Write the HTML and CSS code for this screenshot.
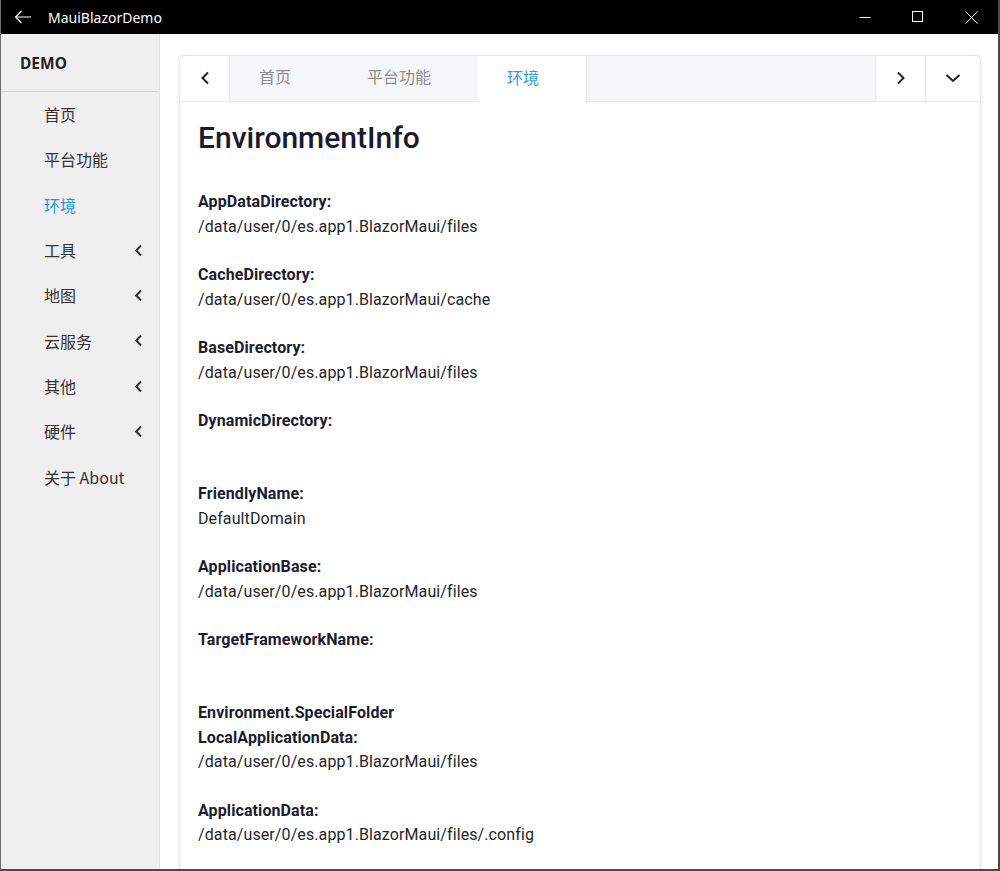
FILE: index.html
```html
<!DOCTYPE html>
<html lang="zh">
<head>
<meta charset="utf-8">
<title>MauiBlazorDemo</title>
<link rel="stylesheet" href="styles.css">
</head>
<body>
<div class="window">
  <header class="titlebar">
    <svg class="tb-back" width="18" height="14" viewBox="0 0 18 14"><path d="M17 7H1.5M7.5 1L1.5 7l6 6" fill="none" stroke="#fff" stroke-width="1.1"/></svg>
    <span class="tb-title">MauiBlazorDemo</span>
    <div class="tb-controls">
      <span class="tb-btn"><svg width="12" height="12" viewBox="0 0 12 12"><path d="M0.5 6.5h11" stroke="#fff" stroke-width="1"/></svg></span>
      <span class="tb-btn"><svg width="12" height="12" viewBox="0 0 12 12"><rect x="0.5" y="0.5" width="10" height="10" fill="none" stroke="#fff" stroke-width="1"/></svg></span>
      <span class="tb-btn"><svg width="13" height="13" viewBox="0 0 13 13"><path d="M0.5 0.5l12 12M12.5 0.5l-12 12" stroke="#fff" stroke-width="1"/></svg></span>
    </div>
  </header>
  <div class="body">
    <nav class="sidebar">
      <div class="brand">DEMO</div>
      <ul class="menu">
        <li class="menu-item">首页</li>
        <li class="menu-item">平台功能</li>
        <li class="menu-item active">环境</li>
        <li class="menu-item">工具<svg class="chev" width="9" height="13" viewBox="0 0 9 13"><path d="M7 1.5L2.2 6.5 7 11.5" fill="none" stroke="#333" stroke-width="2"/></svg></li>
        <li class="menu-item">地图<svg class="chev" width="9" height="13" viewBox="0 0 9 13"><path d="M7 1.5L2.2 6.5 7 11.5" fill="none" stroke="#333" stroke-width="2"/></svg></li>
        <li class="menu-item">云服务<svg class="chev" width="9" height="13" viewBox="0 0 9 13"><path d="M7 1.5L2.2 6.5 7 11.5" fill="none" stroke="#333" stroke-width="2"/></svg></li>
        <li class="menu-item">其他<svg class="chev" width="9" height="13" viewBox="0 0 9 13"><path d="M7 1.5L2.2 6.5 7 11.5" fill="none" stroke="#333" stroke-width="2"/></svg></li>
        <li class="menu-item">硬件<svg class="chev" width="9" height="13" viewBox="0 0 9 13"><path d="M7 1.5L2.2 6.5 7 11.5" fill="none" stroke="#333" stroke-width="2"/></svg></li>
        <li class="menu-item">关于 About</li>
      </ul>
    </nav>
    <main class="main">
      <section class="card">
        <div class="tabbar">
          <span class="tab-nav"><svg width="10" height="14" viewBox="0 0 10 14"><path d="M8 1.5L2.5 7 8 12.5" fill="none" stroke="#222" stroke-width="2"/></svg></span>
          <div class="tabs">
            <span class="tab">首页</span>
            <span class="tab">平台功能</span>
            <span class="tab active">环境</span>
          </div>
          <span class="tab-nav"><svg width="10" height="14" viewBox="0 0 10 14"><path d="M2 1.5L7.5 7 2 12.5" fill="none" stroke="#222" stroke-width="2"/></svg></span>
          <span class="tab-nav wide"><svg width="16" height="10" viewBox="0 0 16 10"><path d="M1.5 2l6.5 6 6.5-6" fill="none" stroke="#222" stroke-width="2"/></svg></span>
        </div>
        <div class="content">
          <h1 class="title">EnvironmentInfo</h1>
          <dl class="info">
            <div class="info-item"><dt>AppDataDirectory:</dt><dd>/data/user/0/es.app1.BlazorMaui/files</dd></div>
            <div class="info-item"><dt>CacheDirectory:</dt><dd>/data/user/0/es.app1.BlazorMaui/cache</dd></div>
            <div class="info-item"><dt>BaseDirectory:</dt><dd>/data/user/0/es.app1.BlazorMaui/files</dd></div>
            <div class="info-item"><dt>DynamicDirectory:</dt><dd></dd></div>
            <div class="info-item"><dt>FriendlyName:</dt><dd>DefaultDomain</dd></div>
            <div class="info-item"><dt>ApplicationBase:</dt><dd>/data/user/0/es.app1.BlazorMaui/files</dd></div>
            <div class="info-item"><dt>TargetFrameworkName:</dt><dd></dd></div>
            <div class="info-item"><dt>Environment.SpecialFolder<br>LocalApplicationData:</dt><dd>/data/user/0/es.app1.BlazorMaui/files</dd></div>
            <div class="info-item"><dt>ApplicationData:</dt><dd>/data/user/0/es.app1.BlazorMaui/files/.config</dd></div>
          </dl>
        </div>
      </section>
    </main>
  </div>
</div>
</body>
</html>
```

FILE: styles.css
```css
* { box-sizing: border-box; }
html, body { margin: 0; padding: 0; height: 100%; overflow: hidden; background: #fff; }
body { font-family: Roboto, "Noto Sans CJK SC", sans-serif; }

.window {
  width: 1000px;
  height: 871px;
  display: flex;
  flex-direction: column;
  border-left: 1px solid #6e6e6e;
  border-right: 2px solid #4a4a4a;
  border-bottom: 2px solid #4a4a4a;
  overflow: hidden;
}

.titlebar {
  height: 34px;
  flex: none;
  background: #000;
  color: #fff;
  display: flex;
  align-items: center;
}
.tb-back { margin-left: 13px; }
.tb-title {
  margin-left: 16px;
  font-family: "Noto Sans", "Open Sans", sans-serif;
  font-size: 14px;
}
.tb-controls { margin-left: auto; display: flex; height: 100%; }
.tb-btn {
  width: 53px;
  height: 100%;
  display: flex;
  align-items: center;
  justify-content: center;
}
.tb-btn:last-child { width: 54px; }

.body { flex: 1; display: flex; min-height: 0; }

.sidebar {
  width: 159px;
  flex: none;
  background: #efefef;
  border-right: 1px solid #e2e2e2;
  box-shadow: 1px 0 3px rgba(0,0,0,0.05);
  font-family: "Noto Sans CJK SC", "Noto Sans", sans-serif;
}
.brand {
  height: 58px;
  display: flex;
  align-items: center;
  padding-left: 19px;
  font-family: "Noto Sans", "Noto Sans CJK SC", sans-serif;
  font-weight: 700;
  font-size: 15.5px;
  color: #222;
  border-bottom: 1px solid #cfcfcf;
}
.menu { list-style: none; margin: 0; padding: 0; }
.menu-item {
  height: 45.3px;
  display: flex;
  align-items: center;
  padding-left: 43px;
  padding-bottom: 1px;
  font-size: 16px;
  color: #333;
  position: relative;
}
.menu-item.active { color: #1a9bdc; }
.menu-item .chev { position: absolute; left: 133px; top: 16px; }

.main { flex: 1; background: #fff; padding: 21px 17px 0 19px; min-width: 0; }
.card {
  height: 100%;
  border: 1px solid #e6e6e6;
  border-bottom: none;
  border-radius: 6px 6px 0 0;
  box-shadow: 0 0 5px rgba(0,0,0,0.07);
  background: #fff;
  display: flex;
  flex-direction: column;
}
.tabbar {
  height: 46px;
  flex: none;
  display: flex;
  border-bottom: 1px solid #e9e9e9;
}
.tab-nav {
  width: 50px;
  flex: none;
  display: flex;
  align-items: center;
  justify-content: center;
  background: #fff;
  padding-bottom: 2px;
}
.tab-nav:first-child { border-right: 1px solid #e6e6e6; border-top-left-radius: 6px; }
.tabs + .tab-nav { border-left: 1px solid #e6e6e6; }
.tab-nav.wide { width: 55px; border-left: 1px solid #e6e6e6; border-top-right-radius: 6px; }
.tabs {
  flex: 1;
  display: flex;
  background: #f5f6f8;
  font-family: "Noto Sans CJK SC", sans-serif;
}
.tab {
  display: flex;
  align-items: center;
  padding: 0 47px 5px 29px;
  font-size: 16px;
  color: #8e8e8e;
}
.tab.active {
  background: #fff;
  color: #3b99db;
  border-right: 1px solid #e6e6e6;
  margin-bottom: -1px;
}

.content { padding: 18px 18px 0; color: #212529; }
.title {
  margin: 0 0 34px;
  font-family: Roboto, sans-serif;
  font-weight: 500;
  font-size: 30px;
  line-height: 36px;
  color: #1a1b2d;
}
.info { margin: 0; letter-spacing: 0.1px; }
.info-item { margin-bottom: 24px; font-size: 16px; line-height: 24.5px; }
.info dt { font-weight: 700; color: #1b1c2c; }
.info dd { margin: 0; min-height: 24.5px; color: #212529; }
```
